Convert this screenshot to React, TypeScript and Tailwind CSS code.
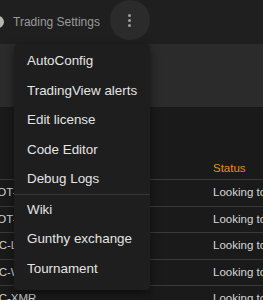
export default function App() {
  const rows = [
    { pair: "DOT-BTC", status: "Looking to buy", off: "ml-[-11px]" },
    { pair: "DOT-ETH", status: "Looking to buy", off: "ml-[-11px]" },
    { pair: "BTC-LTC", status: "Looking to buy", off: "ml-[-16px]" },
    { pair: "BTC-WAVES", status: "Looking to buy", off: "ml-[-16px]" },
    { pair: "BTC-XMR", status: "Looking to buy", off: "ml-[-16px]" },
  ];
  const items = ["AutoConfig", "TradingView alerts", "Edit license", "Code Editor", "Debug Logs"];
  const items2 = ["Wiki", "Gunthy exchange", "Tournament"];

  return (
    <div
      className="relative h-[300px] w-[263px] overflow-hidden bg-[#1a1a1a]"
      style={{ fontFamily: '"Liberation Sans", Arial, sans-serif' }}
    >
      {/* Header */}
      <div className="flex h-[44px] items-center bg-[#1f1f1f]">
        <div className="ml-[-8px] h-[12px] w-[12px] shrink-0 rounded-full bg-[#b5b5b5]" />
        <span className="ml-[9px] whitespace-nowrap text-[12px] text-[#9a9a9a]">Trading Settings</span>
        <div className="ml-[10px] mt-[-4px] flex h-[40px] w-[40px] shrink-0 flex-col items-center justify-center gap-[2px] rounded-full bg-[#2b2b2b]">
          <span className="h-[3px] w-[3px] rounded-full bg-[#9e9e9e]" />
          <span className="h-[3px] w-[3px] rounded-full bg-[#9e9e9e]" />
          <span className="h-[3px] w-[3px] rounded-full bg-[#9e9e9e]" />
        </div>
      </div>

      {/* Grey strip */}
      <div className="h-[63px] bg-[#2b2b2b]" />

      {/* Table */}
      <div className="flex h-[73px] items-end border-b border-[#3a3a3a] pb-[2px]">
        <span className="ml-[213px] whitespace-nowrap text-[11.5px] text-[#e8900c]">Status</span>
      </div>
      {rows.map((r) => (
        <div
          key={r.pair}
          className="flex h-[26.5px] items-center whitespace-nowrap border-b border-[#3a3a3a] text-[11.5px] text-[#d6d6d6]"
        >
          <span className={`${r.off} w-[240px] shrink-0`}>{r.pair}</span>
          <span className="absolute left-[213px] shrink-0">{r.status}</span>
        </div>
      ))}

      {/* Menu */}
      <div className="absolute left-[14px] top-[44px] w-[136px] rounded-[4px] bg-[#1e1e1e] pb-[6px] pt-[2.5px] shadow-[0_4px_10px_rgba(0,0,0,0.5)]">
        {items.map((t) => (
          <div key={t} className="flex h-[29.5px] items-center whitespace-nowrap pl-[13px] text-[13.4px] text-[#e4e4e4]">
            {t}
          </div>
        ))}
        <div className="h-px bg-[#363636]" />
        {items2.map((t) => (
          <div key={t} className="flex h-[29.5px] items-center whitespace-nowrap pl-[13px] text-[13.4px] text-[#e4e4e4]">
            {t}
          </div>
        ))}
      </div>
    </div>
  );
}
